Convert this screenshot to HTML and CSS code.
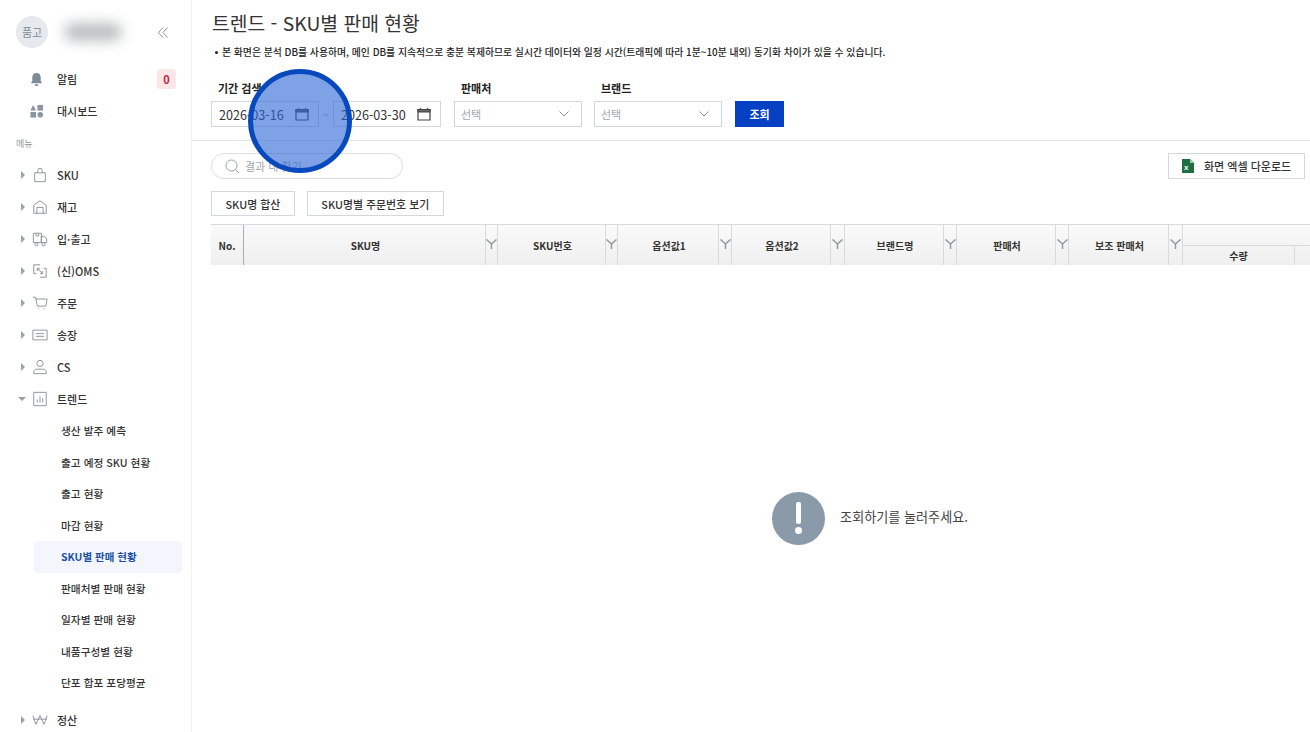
FILE: index.html
```html
<!DOCTYPE html>
<html lang="ko">
<head>
<meta charset="utf-8">
<title>트렌드 - SKU별 판매 현황</title>
<link rel="stylesheet" href="styles.css">
</head>
<body>
<div class="app">
  <aside class="sidebar">
    <div class="profile">
      <div class="avatar">품고</div>
      <div class="blurname"></div>
      <svg class="collapse" width="10" height="11" viewBox="0 0 10 11" fill="none" stroke="#8a929c" stroke-width="1"><path d="M5 .5 .5 5.500 5 10.500M9.500 .5 5 5.500l4.500 5"/></svg>
    </div>
    <div class="top-item item-alarm">
      <svg class="top-icon" width="15" height="15" viewBox="0 0 16 16" fill="#7f8b98"><path d="M8 1C5 1 3.500 3.200 3.500 6v3.500L2 12h12l-1.500-2.500V6C12.500 3.200 11 1 8 1z"/><path d="M6 13a2 2 0 0 0 4 0z"/></svg>
      <span class="top-label">알림</span>
      <span class="badge">0</span>
    </div>
    <div class="top-item">
      <svg class="top-icon" width="15" height="15" viewBox="0 0 16 16" fill="#8b96a2"><path d="M4.500 1 7.500 7h-6z"/><rect x="9" y="1" width="6" height="6"/><rect x="1.500" y="8.500" width="6" height="6"/><circle cx="12" cy="11.500" r="3"/></svg>
      <span class="top-label">대시보드</span>
    </div>
    <div class="menu-title">메뉴</div>
    <nav class="nav">
      <div class="nav-item"><i class="caret"></i>
        <svg class="nav-icon" viewBox="0 0 18 18"><path d="M3 6.500h12v10H3zM6.500 6.500V4a2.500 2.500 0 0 1 5 0v2.500"/></svg><span>SKU</span></div>
      <div class="nav-item"><i class="caret"></i>
        <svg class="nav-icon" viewBox="0 0 18 18"><path d="M2 16V7l7-5 7 5v9zM5.500 16V9.500h7V16"/></svg><span>재고</span></div>
      <div class="nav-item"><i class="caret"></i>
        <svg class="nav-icon" viewBox="0 0 18 18"><path d="M1.500 2.500h9V13h-9zM10.500 6H14l2.500 3v4h-6zM4.500 2.500v3h3v-3"/><circle cx="5" cy="15" r="1.800"/><circle cx="13" cy="15" r="1.800"/></svg><span>입·출고</span></div>
      <div class="nav-item"><i class="caret"></i>
        <svg class="nav-icon" viewBox="0 0 18 18"><path d="M9 2H2v10h3M9 16h7V6h-3M6 6l6 6M6 6h3M6 6v3M12 12H9M12 12V9"/></svg><span>(신)OMS</span></div>
      <div class="nav-item"><i class="caret"></i>
        <svg class="nav-icon" viewBox="0 0 18 18"><path d="M1 2.500h3l2 10h9.500L17 4.500H4.500M7 15.500h1M13 15.500h1"/></svg><span>주문</span></div>
      <div class="nav-item"><i class="caret"></i>
        <svg class="nav-icon" viewBox="0 0 18 18"><path d="M1 3.500h16v11H1zM4.500 7.500h9M4.500 10.500h9"/></svg><span>송장</span></div>
      <div class="nav-item"><i class="caret"></i>
        <svg class="nav-icon" viewBox="0 0 18 18"><circle cx="9" cy="5" r="3.500"/><path d="M2 16.500v-1.500c0-2 1.500-3.500 3.500-3.500h7c2 0 3.500 1.500 3.500 3.500v1.500z"/></svg><span>CS</span></div>
      <div class="nav-item"><i class="caret caret-open"></i>
        <svg class="nav-icon" viewBox="0 0 18 18"><path d="M2 1.500h14v15H2zM6 13V9.500M9 13V6M12 13V8"/></svg><span>트렌드</span></div>
      <div class="sub-list">
        <div class="sub-item">생산 발주 예측</div>
        <div class="sub-item">출고 예정 SKU 현황</div>
        <div class="sub-item">출고 현황</div>
        <div class="sub-item">마감 현황</div>
        <div class="sub-item sub-active">SKU별 판매 현황</div>
        <div class="sub-item">판매처별 판매 현황</div>
        <div class="sub-item">일자별 판매 현황</div>
        <div class="sub-item">내품구성별 현황</div>
        <div class="sub-item">단포 합포 포당평균</div>
      </div>
      <div class="nav-item nav-last"><i class="caret"></i>
        <svg class="nav-icon" viewBox="0 0 18 18"><path d="M1 4l3.500 10L9 4l4.500 10L17 4M1 8h16"/></svg><span>정산</span></div>
    </nav>
  </aside>

  <main class="content">
    <section class="search-panel">
      <h1 class="title">트렌드 - SKU별 판매 현황</h1>
      <p class="notice"><span class="bullet"></span>본 화면은 분석 DB를 사용하며, 메인 DB를 지속적으로 충분 복제하므로 실시간 데이터와 일정 시간(트래픽에 따라 1분~10분 내외) 동기화 차이가 있을 수 있습니다.</p>
      <div class="filters">
        <div class="field field-date">
          <label class="field-label">기간 검색</label>
          <div class="date-row">
            <div class="date-input"><span>2026-03-16</span>
              <svg class="cal" width="14" height="14" viewBox="0 0 14 14"><path d="M1 2.500h12v10.500H1z"/><path class="cal-band" d="M1 2.500h12V5H1z"/><path d="M3.500 1v2M10.500 1v2"/></svg></div>
            <span class="tilde">~</span>
            <div class="date-input"><span>2026-03-30</span>
              <svg class="cal" width="14" height="14" viewBox="0 0 14 14"><path d="M1 2.500h12v10.500H1z"/><path class="cal-band" d="M1 2.500h12V5H1z"/><path d="M3.500 1v2M10.500 1v2"/></svg></div>
          </div>
        </div>
        <div class="field">
          <label class="field-label">판매처</label>
          <div class="select"><span>선택</span>
            <svg width="10" height="6" viewBox="0 0 10 6" fill="none" stroke="#8a8f96"><path d="M.5.5 5 5 9.500.5"/></svg></div>
        </div>
        <div class="field">
          <label class="field-label">브랜드</label>
          <div class="select"><span>선택</span>
            <svg width="10" height="6" viewBox="0 0 10 6" fill="none" stroke="#8a8f96"><path d="M.5.5 5 5 9.500.5"/></svg></div>
        </div>
        <button class="btn-search">조회</button>
      </div>
    </section>

    <section class="results">
      <div class="result-top">
        <div class="result-search">
          <svg width="15" height="15" viewBox="0 0 15 15" fill="none" stroke="#9a9fa5"><circle cx="6.500" cy="6.500" r="5.500"/><path d="M10.500 10.500 14 14"/></svg>
          <span>결과 내 찾기</span>
        </div>
        <button class="btn-excel">
          <svg width="12" height="14" viewBox="0 0 12 14"><path d="M0 0h8l4 4v10H0z" fill="#1d6f42"/><path d="M8 0l4 4H8z" fill="#9cc7ae"/><text x="2" y="11" class="xl">x</text></svg>
          <span>화면 엑셀 다운로드</span>
        </button>
      </div>
      <div class="tabs">
        <button class="tab">SKU명 합산</button>
        <button class="tab">SKU명별 주문번호 보기</button>
      </div>
      <div class="grid-head">
        <div class="hc hc-no">No.</div>
        <div class="hc">SKU명</div><div class="hf"><svg class="funnel"><use href="#fn"/></svg></div>
        <div class="hc">SKU번호</div><div class="hf"><svg class="funnel"><use href="#fn"/></svg></div>
        <div class="hc">옵션값1</div><div class="hf"><svg class="funnel"><use href="#fn"/></svg></div>
        <div class="hc">옵션값2</div><div class="hf"><svg class="funnel"><use href="#fn"/></svg></div>
        <div class="hc">브랜드명</div><div class="hf"><svg class="funnel"><use href="#fn"/></svg></div>
        <div class="hc">판매처</div><div class="hf"><svg class="funnel"><use href="#fn"/></svg></div>
        <div class="hc">보조 판매처</div><div class="hf"><svg class="funnel"><use href="#fn"/></svg></div>
        <div class="hgroup">
          <div class="hgroup-top"></div>
          <div class="hgroup-bottom">
            <div class="hsub">수량</div>
            <div class="hsub hsub-rest"></div>
          </div>
        </div>
      </div>
      <div class="empty">
        <div class="empty-icon"><i class="ex-bar"></i><i class="ex-dot"></i></div>
        <span class="empty-text">조회하기를 눌러주세요.</span>
      </div>
    </section>
  </main>
</div>
<div class="pointer"></div>
<svg class="defs" width="0" height="0"><symbol id="fn" viewBox="0 0 11 10"><path d="M.5.5l5 4.500V10M10.500.5l-5 4.500" fill="none" stroke="#94989d" stroke-width="1.500"/></symbol></svg>
</body>
</html>
```
FILE: styles.css
```css
* { box-sizing: border-box; }
html, body { margin: 0; height: 100%; overflow: hidden; }
body { font-family: "Noto Sans CJK KR", "Noto Sans", sans-serif; color: #222; background: #fff; font-size: 11px; }
.app { display: flex; height: 732px; width: 1310px; overflow: hidden; }

.sidebar { width: 192px; flex: none; border-right: 1px solid #eef0f2; height: 732px; overflow: hidden; padding: 16px 15px 0 16px; }
.profile { display: flex; align-items: center; height: 32px; }
.avatar { width: 32px; height: 32px; border-radius: 50%; background: #e6eaef; color: #7f8994; font-size: 11px; display: flex; align-items: center; justify-content: center; flex: none; }
.blurname { width: 56px; height: 16px; margin-left: 17px; background: #b3b6b9; filter: blur(7px); border-radius: 6px; }
.collapse { margin-left: auto; margin-right: 8px; }
.top-item { display: flex; align-items: center; height: 32px; padding-left: 13px; font-weight: 500; font-size: 11px; color: #333; }
.item-alarm { margin-top: 15px; }
.top-label { margin-left: 13px; }
.badge { margin-left: auto; width: 19px; height: 20px; background: #fbe6e8; color: #c4283f; border-radius: 4px; display: flex; align-items: center; justify-content: center; font-weight: 700; font-size: 11px; }
.menu-title { color: #8f969e; font-size: 9px; margin-top: 10px; height: 14px; line-height: 14px; }
.nav { margin-top: 8px; margin-left: 5px; }
.nav-item { display: flex; align-items: center; height: 32px; font-weight: 500; font-size: 11px; color: #333; }
.nav-item span { margin-left: 9px; }
.caret { width: 0; height: 0; border-left: 4px solid #9aa0a6; border-top: 4px solid transparent; border-bottom: 4px solid transparent; margin-right: 7px; flex: none; }
.caret-open { border-top: 4px solid #9aa0a6; border-left: 4px solid transparent; border-right: 4px solid transparent; border-bottom: 0; margin-left: -3px; margin-right: 6px; }
.nav-icon { flex: none; width: 16px; height: 16px; fill: none; stroke: #8f969e; stroke-width: 1.100; }
.sub-list { margin-left: 13px; margin-right: -6px; }
.sub-item { height: 31.500px; display: flex; align-items: center; padding-left: 27px; font-size: 10.700px; font-weight: 500; color: #333; }
.sub-active { background: #f3f7fd; color: #1e4fa8; font-weight: 700; font-size: 10.500px; border-radius: 4px; }
.nav-last { margin-top: 5px; }

.content { flex: 1; min-width: 0; display: flex; flex-direction: column; }
.search-panel { height: 141px; border-bottom: 1px solid #e6e8ea; padding: 9px 0 0 19px; flex: none; }
.title { margin: 0; padding-left: 1px; font-size: 19.300px; font-weight: 400; line-height: 28px; color: #333; }
.notice { margin: 7px 0 0; font-size: 9.850px; line-height: 16px; font-weight: 500; color: #222; display: flex; align-items: center; white-space: nowrap; }
.bullet { width: 3px; height: 3px; border-radius: 50%; background: #222; margin: 0 4px 0 4px; flex: none; }
.filters { display: flex; align-items: flex-end; margin-top: 19px; gap: 12px; }
.field-date { margin-right: 1px; }
.field-label { display: block; font-size: 11px; font-weight: 700; line-height: 18px; padding-left: 7px; height: 22px; color: #222; }
.date-row { display: flex; align-items: center; }
.date-input { width: 108px; height: 26px; border: 1px solid #d5d8db; display: flex; align-items: center; justify-content: space-between; padding: 0 9px 0 7px; font-size: 12.600px; color: #333; }
.cal { fill: none; stroke: #444; stroke-width: 1.200; }
.cal-band { fill: #666; }
.tilde { width: 14px; text-align: center; color: #8f969e; font-size: 11px; }
.select { width: 128px; height: 26px; border: 1px solid #d5d8db; display: flex; align-items: center; justify-content: space-between; padding: 0 12px 0 6px; color: #a3a8ad; font-size: 11px; }
.btn-search { width: 49px; height: 26px; margin-left: 1px; background: #0640c3; color: #fff; border: 0; font: inherit; font-size: 11px; font-weight: 700; padding: 0; }

.results { flex: 1; display: flex; flex-direction: column; padding: 12px 0 0 19px; min-height: 0; }
.result-top { display: flex; justify-content: space-between; align-items: center; height: 26px; padding-right: 5px; }
.result-search { width: 192px; height: 26px; border: 1px solid #dcdfe2; border-radius: 13px; display: flex; align-items: center; padding-left: 13px; gap: 5px; color: #a3a8ad; font-size: 11px; }
.btn-excel { width: 137px; height: 26px; background: #fff; border: 1px solid #d5d8db; display: flex; align-items: center; padding: 0 0 0 13px; gap: 10px; font: inherit; font-size: 11px; font-weight: 500; color: #333; }
.xl { font-size: 8px; fill: #fff; font-family: "Liberation Sans", sans-serif; font-weight: 700; }
.tabs { display: flex; gap: 12px; margin-top: 12px; }
.tab { height: 25px; padding: 0 13.500px; background: #fff; border: 1px solid #d5d8db; font: inherit; font-size: 10.900px; font-weight: 500; color: #333; }
.grid-head { margin-top: 8px; height: 41px; flex: none; display: grid; grid-template-columns: 33px 241px 13px 107px 13px 100px 14px 98px 15px 98px 14px 98px 14px 99px 15px 1fr; border-top: 1px solid #d8dadc; background: linear-gradient(#fafafa, #efefef); font-size: 10px; font-weight: 700; color: #333; }
.hc { display: flex; align-items: center; justify-content: center; padding-left: 2px; }
.hc-no { border-right: 1px solid #a9adb1; padding-left: 0; }
.hf { display: flex; align-items: center; justify-content: center; border-left: 1px solid #d8dadc; border-right: 1px solid #d8dadc; padding-bottom: 2px; }
.funnel { width: 11px; height: 10px; }
.hgroup { display: flex; flex-direction: column; }
.hgroup-top { height: 20px; }
.hgroup-bottom { flex: 1; display: flex; border-top: 1px solid #d8dadc; }
.hsub { width: 112px; display: flex; align-items: center; justify-content: center; border-right: 1px solid #d8dadc; }
.hsub-rest { flex: 1; border-right: 0; }
.empty { flex: 1; display: flex; align-items: center; justify-content: center; gap: 15px; padding: 39px 0 0 219px; }
.empty-icon { width: 53px; height: 53px; border-radius: 50%; background: #8a9aa8; display: flex; flex-direction: column; align-items: center; justify-content: center; gap: 3px; }
.ex-bar { width: 5px; height: 22px; background: #fff; border-radius: 2px 2px 3px 3px; }
.ex-dot { width: 7px; height: 7px; border-radius: 50%; background: #fff; }
.empty-text { font-size: 13.100px; color: #444; padding-bottom: 3px; }

.pointer { position: absolute; left: 248px; top: 69px; width: 104px; height: 104px; border-radius: 50%; border: 5px solid #0849bd; background: rgba(42, 100, 215, 0.6); }
.defs { position: absolute; }
```
